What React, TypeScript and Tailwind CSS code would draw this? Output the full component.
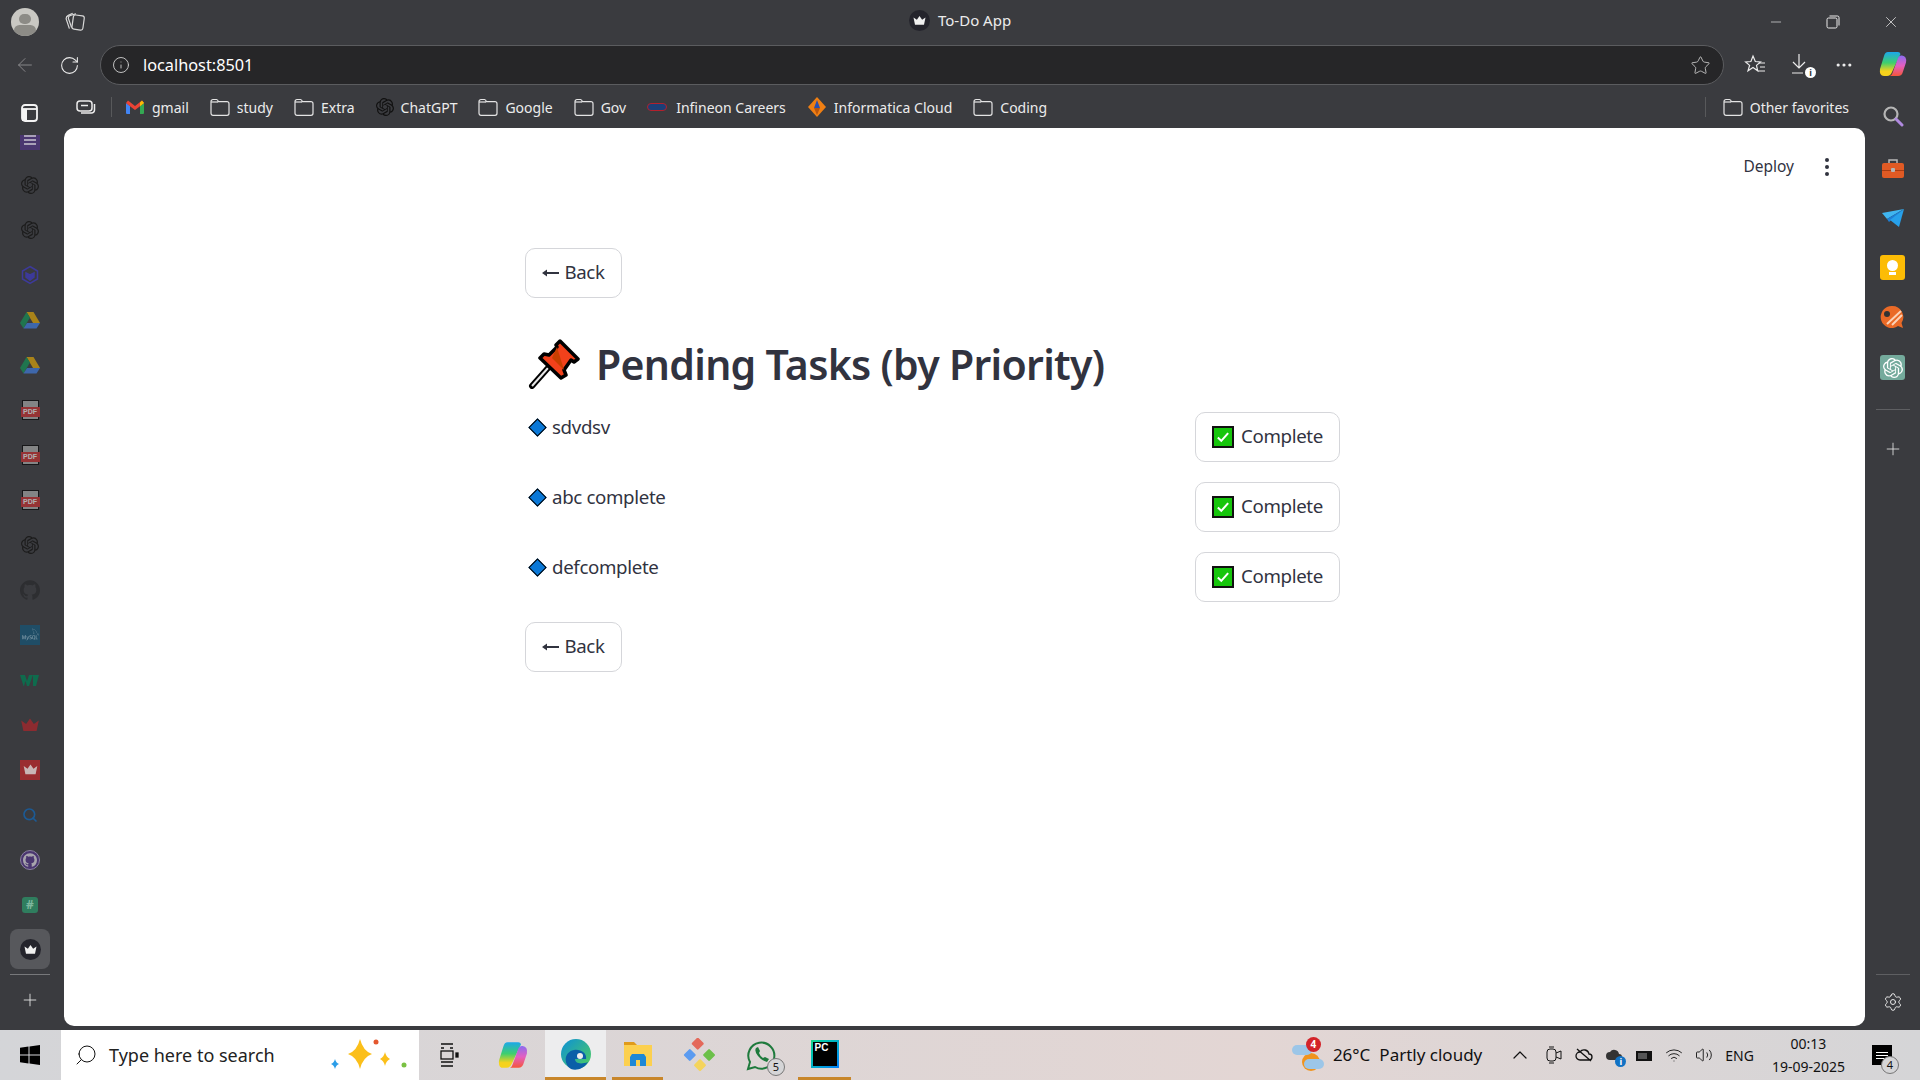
import type { ReactNode } from 'react';
import { ArrowLeft, ChevronUp, Ellipsis, Info, Minus, Plus, RotateCw, Search, Settings, Star, Volume2, Wifi, X } from 'lucide-react';
import { SiGithub, SiOpenai, SiMysql } from 'react-icons/si';

function Folder() {
  return (
    <svg width="20" height="18" viewBox="0 0 20 18" fill="none" stroke="#e4e4e4" strokeWidth="1.2" className="shrink-0">
      <path d="M1 3.5a2 2 0 0 1 2-2h3.5a2 2 0 0 1 1.6 2.2H17a2 2 0 0 1 2 2v9.6a2 2 0 0 1-2 2H3a2 2 0 0 1-2-2z" />
      <path d="M1 4h7" />
    </svg>
  );
}

function Gmail() {
  return (
    <svg width="20" height="16" viewBox="0 0 20 16" className="shrink-0">
      <path d="M1 4v10a1 1 0 0 0 1 1h3V7z" fill="#4285f4" />
      <path d="M19 4v10a1 1 0 0 1-1 1h-3V7z" fill="#34a853" />
      <path d="M1 4 3 1.6 10 7l7-5.4L19 4l-4 3.2L10 11 5 7.200z" fill="#ea4335" />
      <path d="M15 3.600 17 1.600 19 4 15 7.200z" fill="#fbbc04" />
    </svg>
  );
}

function Crown({ size = 18, color = '#f0f0f0' }: { size?: number; color?: string }) {
  return (
    <svg width={size} height={size} viewBox="0 0 20 20">
      <path d="M2 6 6.500 9 10 4l3.500 5L18 6l-2 9.500H4z" fill={color} />
    </svg>
  );
}

function Copilot({ id, size }: { id: string; size: number }) {
  return (
    <svg width={size} height={size} viewBox="0 0 28 28">
      <defs>
        <linearGradient id={`${id}a`} x1="0.5" y1="0" x2="0.5" y2="1">
          <stop offset="0" stopColor="#1ca7ec" />
          <stop offset="0.45" stopColor="#3ecf6e" />
          <stop offset="0.8" stopColor="#f6d21c" />
        </linearGradient>
        <linearGradient id={`${id}b`} x1="0.5" y1="0" x2="0.5" y2="1">
          <stop offset="0" stopColor="#8a6cf0" />
          <stop offset="0.5" stopColor="#e45fc0" />
          <stop offset="1" stopColor="#f5563a" />
        </linearGradient>
      </defs>
      <path d="M9 2h10q2 0 2.500 2L13 22q-1.500 4-5 4H5Q0 26 1 19L5 6q1-4 4-4z" fill={`url(#${id}a)`} />
      <path d="M19 26H10q2.500 0 3.500-3L19 8q.8-2.500 3-2.500h1q5 .5 4 7l-3 9q-1 4.500-5 4.500z" fill={`url(#${id}b)`} />
    </svg>
  );
}

function Drive() {
  return (
    <svg width="20" height="18" viewBox="0 0 20 18" className="opacity-60">
      <path d="M6.500 1h7L20 12h-7z" fill="#f4b400" />
      <path d="M6.500 1 0 12l3.500 5.500L10 6.500z" fill="#0f9d58" />
      <path d="M3.500 17.500h13L20 12H7z" fill="#4285f4" />
    </svg>
  );
}

function Pdf() {
  return (
    <div className="relative w-[17px] h-5 opacity-60 bg-[#b5b5b5] border border-black">
      <span className="absolute left-[-2px] right-[-2px] top-[6px] h-[10px] bg-[#d32f2f] text-white text-[7px] leading-[10px] font-bold text-center [font-family:'Liberation_Sans',sans-serif]">PDF</span>
    </div>
  );
}

function Rail({ children }: { children: ReactNode }) {
  return <div className="h-[45px] shrink-0 flex items-center justify-center">{children}</div>;
}

function Bookmark({ icon, label, ml }: { icon: ReactNode; label: string; ml: string }) {
  return (
    <div className={`flex items-center gap-[7px] ${ml}`}>
      {icon}
      <span className="text-[14px] text-[#ececec] whitespace-nowrap">{label}</span>
    </div>
  );
}

function TitleBar() {
  return (
    <div className="h-[44px] shrink-0 flex items-center pl-[11px] relative">
      <div className="w-7 h-7 rounded-full bg-[#c9c8c3] overflow-hidden flex flex-col items-center pt-[6px]">
        <div className="w-[12px] h-[12px] rounded-full bg-[#8c8b86]" />
        <div className="w-[22px] h-[14px] rounded-full bg-[#8c8b86] mt-[1px]" />
      </div>
      <svg width="22" height="22" viewBox="0 0 20 20" fill="none" stroke="#d8d8d8" strokeWidth="1.100" className="ml-[26px]">
        <rect x="7" y="4" width="10" height="13" rx="2" transform="rotate(8 12 10)" />
        <path d="M6 15 3 6.500q0-2 2-2.500l5-1.500" />
        <path d="M4 16 1 7q0-2 2-3l4-2" />
      </svg>
      <div className="absolute left-[909px] top-[9px] flex items-center gap-[8px]">
        <div className="w-[21px] h-[21px] rounded-full bg-[#24242c] flex items-center justify-center">
          <Crown size={15} />
        </div>
        <span className="text-[15px] text-[#ececec]">To-Do App</span>
      </div>
      <div className="ml-auto flex items-center gap-[42px] pr-[20px] text-[#ececec]">
        <Minus size={16} strokeWidth={1} />
        <svg width="14" height="14" viewBox="0 0 14 14" fill="none" stroke="#ececec">
          <rect x="1" y="3" width="10" height="10" rx="1.500" />
          <path d="M3.500 1h8a1.500 1.500 0 0 1 1.500 1.500v8" />
        </svg>
        <X size={18} strokeWidth={1} />
      </div>
    </div>
  );
}

function AddressRow() {
  return (
    <div className="h-[42px] flex items-center shrink-0">
      <ArrowLeft size={22} strokeWidth={1} className="ml-[14px] text-[#8d8d8f]" />
      <RotateCw size={21} strokeWidth={1.200} className="ml-[23px] text-[#ececec]" />
      <div className="ml-[20px] w-[1624px] h-[40px] rounded-full bg-[#262628] border border-[#5b5c5f] flex items-center pl-[11px] pr-[12px]">
        <Info size={18} strokeWidth={1.200} className="text-[#d0d0d0]" />
        <span className="ml-[13px] text-[16.300px] text-white">localhost:8501</span>
        <Star size={21} strokeWidth={1} className="ml-auto text-[#c8c8c8]" />
      </div>
      <svg width="22" height="22" viewBox="0 0 22 22" fill="none" stroke="#ececec" strokeWidth="1.200" className="ml-[20px]">
        <path d="M9 2l2.300 5.500 5.200.4-4 3.500 1.200 5.400L9 13.500l-5 3.300 1.600-5.400-4-3.500 5.300-.4z" />
        <path d="M15 9h6M16 13h5M14 17h7" />
      </svg>
      <div className="ml-[25px] relative w-5 h-6 text-[#ececec]">
        <svg width="20" height="24" viewBox="0 0 20 24" fill="none" stroke="#ececec" strokeWidth="1.200">
          <path d="M8 1v14M2 9l6 6 6-6M1 20h11" />
        </svg>
        <span className="absolute right-[-5px] bottom-[-1px] w-[11px] h-[11px] rounded-full bg-white text-[#333] text-[9px] leading-[11px] font-bold text-center">i</span>
      </div>
      <Ellipsis size={20} strokeWidth={1.800} className="ml-[23px] text-[#ececec]" />
    </div>
  );
}

function BookmarksBar() {
  return (
    <div className="h-[42px] shrink-0 flex items-center [font-family:'Noto_Sans',sans-serif]">
      <svg width="20" height="16" viewBox="0 0 20 16" fill="none" stroke="#ececec" strokeWidth="1.500" className="ml-[12px]">
        <rect x="1" y="2" width="15" height="10" rx="3" />
        <path d="M5 6.500h7M18.500 5v6a3 3 0 0 1-3 3H5" />
      </svg>
      <div className="ml-[15px] w-px h-5 bg-[#58595b]" />
      <Bookmark ml="ml-[13px]" icon={<Gmail />} label="gmail" />
      <Bookmark ml="ml-[21px]" icon={<Folder />} label="study" />
      <Bookmark ml="ml-[21px]" icon={<Folder />} label="Extra" />
      <Bookmark ml="ml-[21px]" icon={<SiOpenai size={18} className="text-[#111]" />} label="ChatGPT" />
      <Bookmark ml="ml-[21px]" icon={<Folder />} label="Google" />
      <Bookmark ml="ml-[21px]" icon={<Folder />} label="Gov" />
      <Bookmark
        ml="ml-[21px]"
        icon={<div className="w-5 h-[8px] rounded-full border border-[#b3202c] bg-[#1c3f77] shrink-0 mr-[2px]" />}
        label="Infineon Careers"
      />
      <Bookmark
        ml="ml-[21px]"
        icon={
          <svg width="20" height="22" viewBox="0 0 20 22" className="shrink-0">
            <path d="M10 1 19 11 10 21 1 11z" fill="#f07f13" />
            <path d="M10 4 13 12H7z" fill="#2a4fb0" />
            <path d="M7 12h6l-3 7z" fill="#b8560f" />
          </svg>
        }
        label="Informatica Cloud"
      />
      <Bookmark ml="ml-[21px]" icon={<Folder />} label="Coding" />
      <div className="ml-auto flex items-center pr-[16px]">
        <div className="w-px h-5 bg-[#58595b] mr-[17px]" />
        <Bookmark ml="" icon={<Folder />} label="Other favorites" />
      </div>
    </div>
  );
}

function LeftRail() {
  return (
    <div className="w-[64px] shrink-0 flex flex-col pr-[4px]">
      <div className="h-[49px] shrink-0 flex items-end justify-center pb-[12px]">
        <svg width="20" height="20" viewBox="0 0 20 20" fill="none" stroke="#f4f4f4" strokeWidth="1.800">
          <rect x="2" y="2" width="15" height="16" rx="3" />
          <path d="M2 6h15" />
          <rect x="2" y="6" width="5" height="12" fill="#f4f4f4" stroke="none" />
        </svg>
      </div>
      <div className="flex-1 overflow-hidden flex flex-col">
        <div className="-mt-[18px]">
          <Rail>
            <div className="w-5 h-5 bg-[#4a3670] flex flex-col justify-center gap-[2px] px-[4px]">
              <div className="h-[2px] bg-[#a9a0b8]" />
              <div className="h-[2px] bg-[#a9a0b8]" />
              <div className="h-[2px] bg-[#a9a0b8]" />
            </div>
          </Rail>
        </div>
        <Rail><SiOpenai size={18} className="text-[#1c1c1c]" /></Rail>
        <Rail><SiOpenai size={18} className="text-[#1c1c1c]" /></Rail>
        <Rail>
          <svg width="20" height="20" viewBox="0 0 20 20" fill="none" stroke="#3d3a9a" strokeWidth="1.500">
            <path d="M10 1.500 17.500 6v8L10 18.500 2.500 14V6z" />
            <path d="M6 8l4 2 4-2v4l-4 3-4-3z" fill="#3d3a9a" />
          </svg>
        </Rail>
        <Rail><Drive /></Rail>
        <Rail><Drive /></Rail>
        <Rail><Pdf /></Rail>
        <Rail><Pdf /></Rail>
        <Rail><Pdf /></Rail>
        <Rail><SiOpenai size={18} className="text-[#1c1c1c]" /></Rail>
        <Rail><SiGithub size={20} className="text-[#2d2e31]" /></Rail>
        <Rail>
          <div className="w-5 h-5 bg-[#1f4d66] flex items-center justify-center">
            <SiMysql size={17} className="text-[#7f9aa8]" />
          </div>
        </Rail>
        <Rail>
          <svg width="22" height="16" viewBox="0 0 22 16"><path d="M1 3h5l2 6 2-6h4l-4 11H8L6.500 9 5 14H4.500z M14 3h6l-3 11h-3z" fill="#0f6b4d" /></svg>
        </Rail>
        <Rail><Crown size={22} color="#8c2b30" /></Rail>
        <Rail>
          <div className="w-5 h-5 bg-[#9a2d30] flex items-center justify-center">
            <Crown size={17} color="#c9b6b6" />
          </div>
        </Rail>
        <Rail><Search size={16} strokeWidth={2.500} className="text-[#1c5a94]" /></Rail>
        <Rail>
          <div className="w-5 h-5 rounded-full bg-[#4a3670] flex items-center justify-center border border-[#8a80a0]">
            <SiGithub size={14} className="text-[#a7a4ac]" />
          </div>
        </Rail>
        <Rail>
          <div className="w-[16px] h-[16px] rounded-[3px] bg-[#2f7d5e] text-[#7fb79f] text-[12px] leading-[16px] text-center font-bold">#</div>
        </Rail>
        <div className="h-[40px] mx-[10px] mt-[2px] rounded-[8px] bg-[#57585c] flex items-center justify-center shrink-0">
          <div className="w-[21px] h-[21px] rounded-full bg-[#24242c] flex items-center justify-center">
            <Crown size={15} />
          </div>
        </div>
        <div className="h-px mx-[10px] mt-[5px] bg-[#77787b] shrink-0" />
        <div className="flex justify-center mt-[15px]">
          <Plus size={20} strokeWidth={1} className="text-[#f0f0f0]" />
        </div>
      </div>
    </div>
  );
}

function RightRail() {
  return (
    <div className="w-[55px] shrink-0 flex flex-col items-center pt-[6px]">
      <Copilot id="rail" size={28} />
      <div className="mt-[27px] flex flex-col items-center gap-[25px]">
        <svg width="22" height="22" viewBox="0 0 22 22" fill="none" className="mb-[5px]">
          <circle cx="9" cy="9" r="6.500" stroke="#b5b5b5" strokeWidth="2.200" />
          <path d="M14 14l6 6" stroke="#b08ae0" strokeWidth="3" strokeLinecap="round" />
        </svg>
        <svg width="24" height="24" viewBox="0 0 24 24">
          <path d="M8 6V3h8v3" fill="none" stroke="#b9b9b9" strokeWidth="1.500" />
          <rect x="1" y="6" width="22" height="15" rx="2" fill="#e05a24" />
          <rect x="1" y="13" width="22" height="1" fill="#a93c12" />
          <rect x="10" y="11" width="4" height="4" rx="1" fill="#b5b5b5" />
        </svg>
        <svg width="24" height="24" viewBox="0 0 24 24">
          <path d="M1 7 23 3 6 13z" fill="#3fb5f0" />
          <path d="M23 3 6 13l2 3z" fill="#1c7fd6" />
          <path d="M23 3 9 14l9 7z" fill="#27a0ea" />
        </svg>
        <div className="w-[25px] h-[25px] rounded-[3px] bg-[#fcbc05] flex flex-col items-center justify-center">
          <div className="w-[11px] h-[11px] rounded-full bg-white" />
          <div className="w-[7px] h-[3px] bg-white mt-[1px]" />
        </div>
        <svg width="25" height="25" viewBox="0 0 25 25">
          <path d="M12 1a11 11 0 1 0 6 20l5 2-1.500-5A11 11 0 0 0 12 1z" fill="#ea6a27" />
          <path d="M7 19 21 6M12 20l10-10" stroke="#fbd3b8" strokeWidth="2" />
          <circle cx="7" cy="9" r="3" fill="#333" />
        </svg>
        <div className="w-[25px] h-[25px] rounded-[3px] bg-[#74aa9c] flex items-center justify-center">
          <SiOpenai size={20} className="text-white" />
        </div>
      </div>
      <div className="w-[34px] h-px bg-[#5e5f62] mt-[29px]" />
      <Plus size={20} strokeWidth={1} className="text-[#e8e8e8] mt-[29px]" />
      <div className="w-[34px] h-px bg-[#5e5f62] mt-auto" />
      <Settings size={20} strokeWidth={1.200} className="text-[#e8e8e8] mt-[17px] mb-[18px]" />
    </div>
  );
}

function Pin() {
  return (
    <svg width="54" height="50" viewBox="0 0 54 50" className="shrink-0">
      <path d="M4 47 20 29" stroke="#000" strokeWidth="6" strokeLinecap="round" />
      <path d="M4 47 20 29" stroke="#e8e8e8" strokeWidth="2" />
      <path d="M32 2 50 20 46 23 43 21 36 31 38 36 33 39 12 19 16 15 21 16 29 8 28 6z" fill="#f2411b" stroke="#000" strokeWidth="3.500" strokeLinejoin="round" />
      <path d="M29 8 36 31 24 19z" fill="#c73f00" />
    </svg>
  );
}

function Diamond() {
  return (
    <span className="w-[13px] h-[13px] rotate-45 bg-[#0a78d7] border-[1.500px] border-black shrink-0" />
  );
}

function CheckIcon() {
  return (
    <span className="w-[22px] h-[22px] bg-[#16c60c] border-2 border-[#111] flex items-center justify-center shrink-0">
      <svg width="14" height="12" viewBox="0 0 16 14" fill="none" stroke="#fff" strokeWidth="2.400">
        <path d="M2 7.500 6 11.500 14 2.500" />
      </svg>
    </span>
  );
}

function BackButton({ className }: { className: string }) {
  return (
    <button className={`w-[97px] h-[50px] rounded-[10px] border border-[#d5d6da] bg-white flex items-center justify-center gap-[5px] pb-[2px] text-[18.700px] tracking-[-0.35px] text-[#31333f] ${className}`}>
      <svg width="17" height="10" viewBox="0 0 17 10" className="mt-[2px]"><path d="M0 5 5 1.500V4h12v2H5v2.500z" fill="#31333f" /></svg>
      Back
    </button>
  );
}

function TaskRow({ name }: { name: string }) {
  return (
    <div className="flex h-[50px] mt-[20px]">
      <div className="w-[670px] flex items-start gap-[6px] pt-[1px] text-[18.700px] tracking-[-0.35px] leading-[28px] text-[#31333f]">
        <span className="w-[21px] h-[28px] flex items-center justify-center pl-[3px]"><Diamond /></span>
        {name}
      </div>
      <button className="w-[145px] h-[50px] rounded-[10px] border border-[#d5d6da] bg-white flex items-center justify-center gap-[7px] pb-[2px] text-[18.700px] tracking-[-0.35px] text-[#31333f]">
        <span className="mt-[2px]"><CheckIcon /></span>
        Complete
      </button>
    </div>
  );
}

function Page() {
  return (
    <div className="flex-1 bg-white rounded-[10px] flex flex-col [font-family:'Noto_Sans',sans-serif]">
      <div className="h-[76px] shrink-0 flex items-center justify-end pr-[36px] pt-[1px] text-[#31333f]">
        <span className="text-[15.500px]">Deploy</span>
        <div className="ml-[31px] flex flex-col gap-[3px]">
          <div className="w-1 h-1 rounded-full bg-[#31333f]" />
          <div className="w-1 h-1 rounded-full bg-[#31333f]" />
          <div className="w-1 h-1 rounded-full bg-[#31333f]" />
        </div>
      </div>
      <div className="ml-[461px] w-[815px] pt-[44px]">
        <BackButton className="" />
        <div className="flex items-center gap-[14px] mt-[39px] ml-[3px] h-[54px]">
          <Pin />
          <h1 className="text-[41px] tracking-[-0.7px] leading-[54px] font-semibold text-[#31333f] whitespace-nowrap">Pending Tasks (by Priority)</h1>
        </div>
        <div className="h-px" />
        <TaskRow name="sdvdsv" />
        <TaskRow name="abc complete" />
        <TaskRow name="defcomplete" />
        <BackButton className="mt-[20px]" />
      </div>
    </div>
  );
}

function Taskbar() {
  return (
    <div className="h-[50px] shrink-0 flex items-center bg-gradient-to-r from-[#d4d5d8] via-[#e3d6d4] via-65% to-[#d5d5d7] text-[#111] relative [font-family:'Noto_Sans',sans-serif]">
      <svg width="20" height="20" viewBox="0 0 20 20" className="ml-[20px] shrink-0" fill="#000">
        <path d="M0 2.800 8.500 1.600V9.500H0zM9.500 1.500 20 0V9.500H9.500zM0 10.500H8.500V18.400L0 17.200zM9.500 10.500H20V20L9.500 18.500z" />
      </svg>
      <div className="ml-[21px] w-[358px] h-full bg-white flex items-center pl-[13px] shrink-0">
        <Search size={24} strokeWidth={1} className="-scale-x-100" />
        <span className="ml-[11px] text-[18px] text-[#222]">Type here to search</span>
        <svg width="80" height="36" viewBox="0 0 80 36" className="ml-auto mr-[9px]">
          <path d="M30 2q3 12 12 15-9 3-12 15-3-12-12-15 9-3 12-15z" fill="#fbbf1a" />
          <path d="M55 15q1 5 5 7-4 2-5 7-1-5-5-7 4-2 5-7z" fill="#fbbf1a" />
          <path d="M5 22q1 4 4 5-3 1-4 5-1-4-4-5 3-1 4-5z" fill="#2a9de8" />
          <circle cx="46" cy="5" r="2.500" fill="#e4572e" />
          <circle cx="74" cy="28" r="2.500" fill="#7ac143" />
        </svg>
      </div>
      <div className="ml-[20px] shrink-0">
        <svg width="20" height="24" viewBox="0 0 20 24" fill="none" stroke="#111" strokeWidth="1.300">
          <path d="M2 1h12M2 5h3M11 5h3M2 19h12M2 23h12" />
          <rect x="2" y="8" width="12" height="8" />
          <rect x="17" y="10" width="2" height="4" fill="#111" />
        </svg>
      </div>
      <div className="ml-[39px] shrink-0"><Copilot id="task" size={30} /></div>
      <div className="ml-[17px] w-[61px] h-full bg-[#ededee] border-b-[3px] border-[#c8862a] flex items-center justify-center shrink-0">
        <svg width="32" height="32" viewBox="0 0 32 32">
          <defs>
            <linearGradient id="edge" x1="0" y1="0" x2="1" y2="1">
              <stop offset="0" stopColor="#0c8fd8" />
              <stop offset="1" stopColor="#50d15a" />
            </linearGradient>
          </defs>
          <circle cx="16" cy="16" r="15" fill="url(#edge)" />
          <path d="M11 31C3 26 4 14 14 12c8-1 13 4 12 9h-11c0 4 5 6 13 3-4 7-12 9-17 7z" fill="#0b5fa8" />
          <circle cx="20" cy="18" r="3" fill="#eee" />
        </svg>
      </div>
      <div className="ml-[6px] w-[51px] h-full border-b-[3px] border-[#c8862a] flex items-center justify-center shrink-0">
        <svg width="30" height="28" viewBox="0 0 30 28">
          <path d="M1 2h10l3 3H1z" fill="#e09b1a" />
          <rect x="1" y="5" width="28" height="21" fill="#fcd04f" />
          <path d="M9 14h12l2 3v9H17v-6h-4v6H7v-9z" fill="#1e88d6" />
        </svg>
      </div>
      <div className="ml-[20px] shrink-0">
        <svg width="34" height="34" viewBox="0 0 30 30">
          <rect x="9" y="1" width="8" height="8" rx="1" transform="rotate(45 13 5)" fill="#e4695a" />
          <rect x="2" y="11" width="8" height="8" rx="1" transform="rotate(45 6 15)" fill="#5b9bf0" />
          <rect x="19" y="11" width="8" height="8" rx="1" transform="rotate(45 23 15)" fill="#6cc04a" />
          <rect x="11" y="20" width="8" height="8" rx="1" transform="rotate(45 15 24)" fill="#f4d45c" />
        </svg>
      </div>
      <div className="ml-[28px] relative shrink-0">
        <svg width="32" height="32" viewBox="0 0 32 32" fill="none">
          <path d="M3 30l2-7a13 13 0 1 1 5 5z" stroke="#1e7a3c" strokeWidth="2" />
          <path d="M11 9q-2 3 2 8t9 6l2-3-4-2-2 1q-3-2-4-5l1-2-2-4z" fill="#1e7a3c" />
        </svg>
        <span className="absolute right-[-8px] bottom-[-5px] w-[18px] h-[18px] rounded-full bg-[#d5d5d7] border border-[#777] text-[11px] leading-[16px] text-center">5</span>
      </div>
      <div className="ml-[21px] w-[53px] h-full border-b-[3px] border-[#c8862a] flex items-center justify-center shrink-0">
        <div className="w-[28px] h-[28px] bg-black bg-gradient-to-br from-[#21d789] to-[#087cfa] p-[2px] flex">
          <div className="flex-1 bg-black text-white text-[10px] font-bold leading-[12px] pl-[2px] [font-family:'Liberation_Sans',sans-serif]">PC</div>
        </div>
      </div>
      <div className="ml-auto flex items-center pr-[28px] h-full">
        <div className="relative w-[32px] h-[32px] mr-[9px]">
          <div className="absolute left-[10px] top-[14px] w-[18px] h-[18px] rounded-full bg-[#f0941f]" />
          <div className="absolute left-0 top-[6px] w-[20px] h-[10px] rounded-full bg-[#9cc6e8]" />
          <div className="absolute left-[12px] top-[20px] w-[20px] h-[10px] rounded-full bg-[#9cc6e8]" />
          <span className="absolute left-[14px] top-[-2px] w-[15px] h-[15px] rounded-full bg-[#d3232a] text-white text-[10px] leading-[15px] text-center font-bold">4</span>
        </div>
        <span className="text-[17px]">26°C</span>
        <span className="text-[17px] ml-[9px]">Partly cloudy</span>
        <ChevronUp size={24} strokeWidth={1.200} className="ml-[26px]" />
        <div className="ml-[13px] flex items-center gap-[12px]">
          <svg width="18" height="18" viewBox="0 0 18 18" fill="none" stroke="#111"><rect x="2" y="3" width="9" height="12" rx="3" /><path d="M11 7l5-2v8l-5-2M4 1h5M4 17h5" /></svg>
          <svg width="18" height="18" viewBox="0 0 18 18" fill="none" stroke="#111" strokeWidth="1.300"><path d="M5 14a4 4 0 0 1 0-8 5 5 0 0 1 9 2 3 3 0 0 1 0 6zM2 3l14 12" /></svg>
          <div className="relative w-[18px] h-[18px]">
            <svg width="18" height="18" viewBox="0 0 18 18" fill="#333"><path d="M5 14a4 4 0 0 1 0-8 5 5 0 0 1 9 2 3 3 0 0 1 0 6z" /></svg>
            <span className="absolute right-[-3px] bottom-[-3px] w-[11px] h-[11px] rounded-full bg-[#1172c4] text-white text-[9px] leading-[11px] text-center font-bold">i</span>
          </div>
          <svg width="18" height="18" viewBox="0 0 18 18"><rect x="1" y="5" width="16" height="10" fill="#111" /><rect x="3" y="7" width="9" height="6" fill="#555" /></svg>
          <Wifi size={18} strokeWidth={1.200} />
          <Volume2 size={18} strokeWidth={1.200} />
        </div>
        <span className="ml-[12px] text-[14px]">ENG</span>
        <div className="ml-[18px] flex flex-col items-center text-[14px] leading-[23px]">
          <span>00:13</span>
          <span>19-09-2025</span>
        </div>
        <div className="ml-[27px] relative">
          <div className="w-[20px] h-[20px] bg-black flex flex-col justify-center gap-[2px] px-[4px]">
            <div className="h-px bg-white" />
            <div className="h-px bg-white" />
            <div className="h-px bg-white" />
          </div>
          <span className="absolute right-[-7px] bottom-[-9px] w-[18px] h-[18px] rounded-full bg-[#d5d5d7] border border-[#777] text-[11px] leading-[16px] text-center">4</span>
        </div>
      </div>
    </div>
  );
}

export default function App() {
  return (
    <div className="w-[1920px] h-[1080px] overflow-hidden flex flex-col bg-[#3a3b3f] [font-family:'Noto_Sans',sans-serif]">
      <TitleBar />
      <div className="h-[986px] shrink-0 flex">
        <div className="flex-1 flex flex-col min-w-0">
          <AddressRow />
          <div className="flex-1 flex min-h-0">
            <LeftRail />
            <div className="flex-1 flex flex-col min-w-0 pb-[4px]">
              <BookmarksBar />
              <Page />
            </div>
          </div>
        </div>
        <RightRail />
      </div>
      <Taskbar />
    </div>
  );
}
